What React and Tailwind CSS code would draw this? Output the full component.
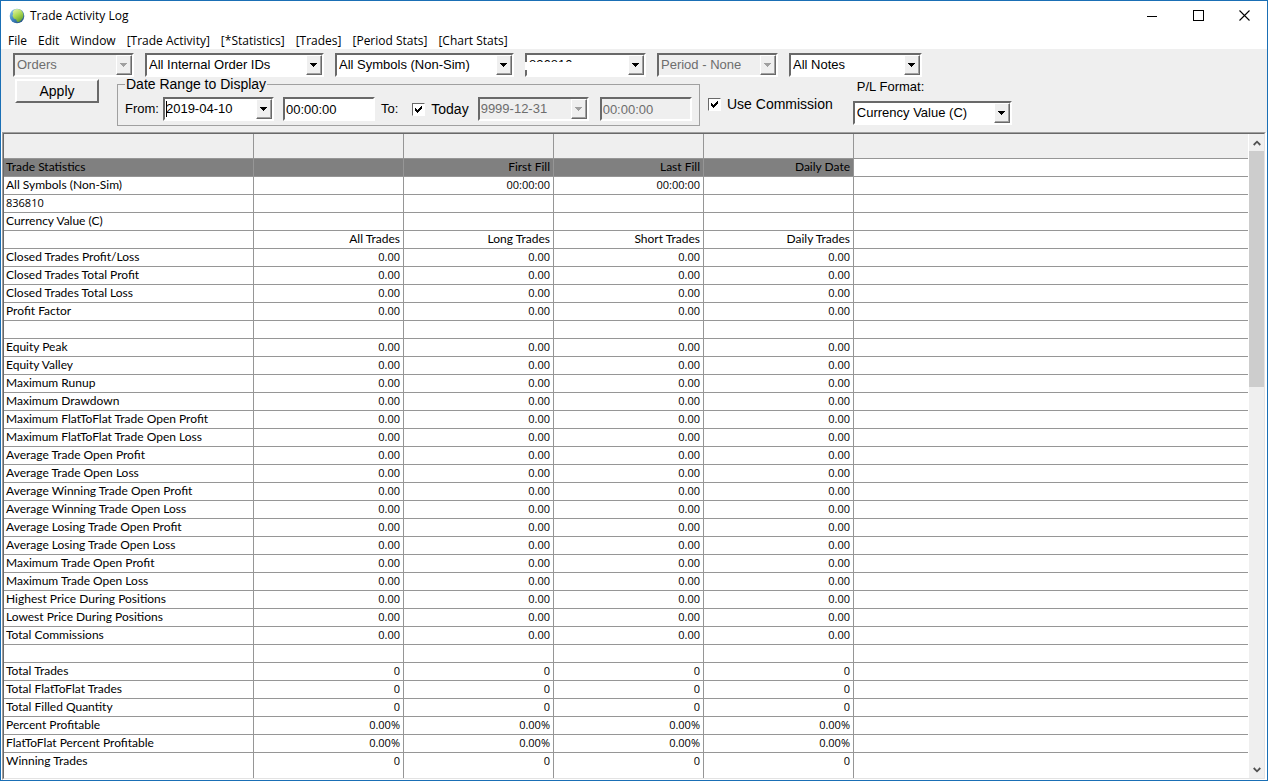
const MENUS = [
  "File",
  "Edit",
  "Window",
  "[Trade Activity]",
  "[*Statistics]",
  "[Trades]",
  "[Period Stats]",
  "[Chart Stats]",
];

const money = ["0.00", "0.00", "0.00", "0.00"];
const count = ["0", "0", "0", "0"];
const percent = ["0.00%", "0.00%", "0.00%", "0.00%"];
const blank = ["", "", "", ""];

const ROWS = [
  ["All Symbols (Non-Sim)", ["", "00:00:00", "00:00:00", ""]],
  ["836810", blank],
  ["Currency Value (C)", blank],
  ["", ["All Trades", "Long Trades", "Short Trades", "Daily Trades"]],
  ["Closed Trades Profit/Loss", money],
  ["Closed Trades Total Profit", money],
  ["Closed Trades Total Loss", money],
  ["Profit Factor", money],
  ["", blank],
  ["Equity Peak", money],
  ["Equity Valley", money],
  ["Maximum Runup", money],
  ["Maximum Drawdown", money],
  ["Maximum FlatToFlat Trade Open Profit", money],
  ["Maximum FlatToFlat Trade Open Loss", money],
  ["Average Trade Open Profit", money],
  ["Average Trade Open Loss", money],
  ["Average Winning Trade Open Profit", money],
  ["Average Winning Trade Open Loss", money],
  ["Average Losing Trade Open Profit", money],
  ["Average Losing Trade Open Loss", money],
  ["Maximum Trade Open Profit", money],
  ["Maximum Trade Open Loss", money],
  ["Highest Price During Positions", money],
  ["Lowest Price During Positions", money],
  ["Total Commissions", money],
  ["", blank],
  ["Total Trades", count],
  ["Total FlatToFlat Trades", count],
  ["Total Filled Quantity", count],
  ["Percent Profitable", percent],
  ["FlatToFlat Percent Profitable", percent],
  ["Winning Trades", count],
];

const SUNKEN = "border-2 border-t-[#696969] border-l-[#696969] border-r-white border-b-white";
const RAISED = "border border-t-white border-l-white border-r-[#696969] border-b-[#696969]";

function ArrowFace({ disabled }) {
  return (
    <span
      className={`flex h-full w-full items-center justify-center border-r border-b border-[#a0a0a0] bg-[#efefef] ${
        disabled ? "text-[#a0a0a0]" : "text-black"
      }`}
    >
      <svg width="7" height="4" viewBox="0 0 7 4" fill="currentColor" shapeRendering="crispEdges" aria-hidden="true">
        <path d="M0 0h7v1H6v1H5v1H4v1H3V3H2V2H1V1H0z" />
      </svg>
    </span>
  );
}

function Combo({ label, value, width, disabled = false, children }) {
  return (
    <div className={`relative h-6 shrink-0 ${width} ${SUNKEN} ${disabled ? "bg-[#efefef]" : "bg-white"}`}>
      <select
        aria-label={label}
        disabled={disabled}
        className="h-full w-full appearance-none bg-transparent pl-0.5 text-[13px] text-black outline-none disabled:text-[#6d6d6d] disabled:opacity-100"
      >
        <option>{value}</option>
      </select>
      <span className={`pointer-events-none absolute inset-y-0 right-0 w-4 ${RAISED}`}>
        <ArrowFace disabled={disabled} />
      </span>
      {children}
    </div>
  );
}

function DateBox({ label, value, disabled = false, caret = false }) {
  return (
    <div className={`relative flex h-6 w-[111px] ${SUNKEN} ${disabled ? "bg-[#efefef]" : "bg-white"}`}>
      <input
        aria-label={label}
        defaultValue={value}
        disabled={disabled}
        className="min-w-0 flex-1 bg-transparent pl-px text-[13px] text-black outline-none disabled:text-[#6d6d6d]"
      />
      {caret && <span className="absolute top-0.5 left-px h-4 w-px bg-black" />}
      <button type="button" aria-label={`Open ${label} calendar`} disabled={disabled} className={`w-4 ${RAISED}`}>
        <ArrowFace disabled={disabled} />
      </button>
    </div>
  );
}

function TimeBox({ label, value, disabled = false }) {
  return (
    <input
      aria-label={label}
      defaultValue={value}
      disabled={disabled}
      className={`h-6 w-[92px] bg-white pl-px text-[13px] text-black outline-none disabled:bg-[#efefef] disabled:text-[#6d6d6d] ${SUNKEN}`}
    />
  );
}

function Check({ children }) {
  return (
    <label className="flex items-center gap-1.5">
      <span className="relative h-[13px] w-[13px] border border-t-[#696969] border-r-white border-b-white border-l-[#696969] bg-white">
        <input type="checkbox" defaultChecked className="peer absolute inset-0 h-full w-full appearance-none" />
        <svg
          className="pointer-events-none absolute top-0.5 left-0.5 hidden peer-checked:block"
          width="7"
          height="7"
          viewBox="0 0 7 7"
          shapeRendering="crispEdges"
          aria-hidden="true"
        >
          <path d="M0 2h1v1h1v1h1V3h1V2h1V1h1V0h1v3H6v1H5v1H4v1H3v1H2V6H1V5H0z" />
        </svg>
      </span>
      {children}
    </label>
  );
}

function AppLogo() {
  return (
    <svg width="16" height="16" viewBox="0 0 16 16" aria-hidden="true">
      <defs>
        <linearGradient id="globe" x1="0" y1="0.1" x2="0.8" y2="1">
          <stop offset="0" stopColor="#8fc9ee" />
          <stop offset="0.5" stopColor="#3f86c4" />
          <stop offset="1" stopColor="#234f7d" />
        </linearGradient>
        <linearGradient id="land" x1="0.2" y1="0" x2="0.7" y2="1">
          <stop offset="0" stopColor="#e2f3a4" />
          <stop offset="0.5" stopColor="#a8d650" />
          <stop offset="1" stopColor="#5f9e2e" />
        </linearGradient>
      </defs>
      <circle cx="8" cy="8" r="7.3" fill="url(#globe)" />
      <path
        d="M5.4 1.6C8 .4 11.4 1 13.2 3.4c1.8 2.4 1.6 5.6-.2 7.8l-1.4 1.6-1.8 1.2-1.8-.2-.8-2.2-2.4-1.2-1.4-2.6.8-2.2L3.6 4z"
        fill="url(#land)"
      />
    </svg>
  );
}

function TitleBar() {
  return (
    <header className="flex h-[29px] items-center pl-2">
      <AppLogo />
      <h1 className="ml-[5px] flex-1 text-[12px]">Trade Activity Log</h1>
      <button type="button" aria-label="Minimize" className="flex h-full w-[46px] items-center justify-center">
        <svg width="10" height="10" viewBox="0 0 10 10" shapeRendering="crispEdges">
          <path d="M0 5h10v1H0z" />
        </svg>
      </button>
      <button type="button" aria-label="Maximize" className="flex h-full w-[46px] items-center justify-center">
        <svg width="11" height="11" viewBox="0 0 11 11" shapeRendering="crispEdges">
          <path d="M.5.5h10v10H.5z" fill="none" stroke="#000" />
        </svg>
      </button>
      <button type="button" aria-label="Close" className="flex h-full w-[46px] items-center justify-center">
        <svg width="11" height="11" viewBox="0 0 11 11">
          <path d="M.5.5l10 10M10.5.5l-10 10" stroke="#000" strokeWidth="1.1" />
        </svg>
      </button>
    </header>
  );
}

function Toolbar() {
  return (
    <section className="bg-[#efefef] pt-1 pb-1.5 font-['Liberation_Sans',Arial,sans-serif] text-[14px] leading-4 text-black">
      <div className="flex gap-[11px] pl-3">
        <Combo label="Record type" value="Orders" width="w-[121px]" disabled />
        <Combo label="Order IDs" value="All Internal Order IDs" width="w-[179px]" />
        <Combo label="Symbols" value="All Symbols (Non-Sim)" width="w-[179px]" />
        <Combo label="Account" value="836810" width="w-[121px]">
          <span className="absolute top-[7px] -left-0.5 h-2 w-24 bg-white" />
        </Combo>
        <Combo label="Period" value="Period - None" width="w-[121px]" disabled />
        <Combo label="Notes" value="All Notes" width="w-[133px]" />
      </div>

      <div className="flex items-start pl-3.5">
        <button
          type="button"
          className="mt-0.5 mr-[18px] h-6 w-[84px] border-2 border-t-white border-r-[#696969] border-b-[#696969] border-l-white"
        >
          Apply
        </button>

        <fieldset className="h-[49px] w-[583px] border border-[#a0a0a0] pl-[7px]">
          <legend className="h-3.5 px-px leading-3.5">Date Range to Display</legend>
          <div className="flex items-center pt-1.5 text-[13px]">
            <span className="mr-1">From:</span>
            <DateBox label="From date" value="2019-04-10" caret />
            <span className="mr-1.5 ml-[9px]">
              <TimeBox label="From time" value="00:00:00" />
            </span>
            <span className="mr-3.5">To:</span>
            <span className="mr-[9px] text-[14px]">
              <Check>Today</Check>
            </span>
            <DateBox label="To date" value="9999-12-31" disabled />
            <span className="ml-[11px]">
              <TimeBox label="To time" value="00:00:00" disabled />
            </span>
          </div>
        </fieldset>

        <div className="mt-[19px] ml-2">
          <Check>Use Commission</Check>
        </div>

        <div className="mt-0.5 ml-5">
          <p className="mb-1.5 pl-1 text-[13px]">P/L Format:</p>
          <Combo label="P/L Format" value="Currency Value (C)" width="w-[159px]" />
        </div>
      </div>
    </section>
  );
}

// Figures are set in a narrower face than the labels.
function CellText({ text }) {
  return /^\d/.test(text) ? (
    <span className="block font-['Open_Sans','Noto_Sans',sans-serif] text-[11px] leading-4">{text}</span>
  ) : (
    <span className="block leading-4">{text}</span>
  );
}

function StatsTable() {
  const cell = "border-r border-b border-[#969696] p-0";
  return (
    <table className="w-full table-fixed border-separate border-spacing-0 font-['Lato','Open_Sans',sans-serif] text-[12px]">
      <colgroup>
        <col className="w-[250px]" />
        <col className="w-[150px]" />
        <col className="w-[150px]" />
        <col className="w-[150px]" />
        <col className="w-[150px]" />
        <col />
      </colgroup>
      <thead>
        <tr className="h-[25px] bg-[#efefef]">
          {[0, 1, 2, 3, 4].map((i) => (
            <td key={i} className={cell} />
          ))}
          <td className="border-b border-[#969696]" />
        </tr>
        <tr className="h-[18px] text-right align-top">
          <th className={`${cell} bg-[#808080] pl-0.5 text-left font-normal`}>
            <CellText text="Trade Statistics" />
          </th>
          <th className={`${cell} bg-[#808080]`} />
          {["First Fill", "Last Fill", "Daily Date"].map((name) => (
            <th key={name} className={`${cell} bg-[#808080] pr-[3px] text-right font-normal`}>
              <CellText text={name} />
            </th>
          ))}
          <td className="border-b border-[#969696] p-0" />
        </tr>
      </thead>
      <tbody>
        {ROWS.map(([label, values], i) => (
          <tr key={i} className="h-[18px] text-right align-top last:h-8">
            <th className={`${cell} pl-0.5 text-left font-normal`}>
              <CellText text={label} />
            </th>
            {values.map((value, j) => (
              <td key={j} className={`${cell} pr-[3px]`}>
                <CellText text={value} />
              </td>
            ))}
            <td className="border-b border-[#969696] p-0" />
          </tr>
        ))}
      </tbody>
    </table>
  );
}

function ScrollBar() {
  return (
    <div className="flex w-[15px] shrink-0 flex-col bg-[#efefef]">
      <button type="button" aria-label="Scroll up" className="flex h-[17px] items-center justify-center">
        <svg width="8" height="6" viewBox="0 0 8 6">
          <path d="M.7 5L4 1.7 7.3 5" fill="none" stroke="#505050" strokeWidth="1.8" />
        </svg>
      </button>
      <div className="h-[236px] bg-[#cdcdcd]" />
      <div className="flex-1" />
      <button type="button" aria-label="Scroll down" className="flex h-[17px] items-center justify-center">
        <svg width="8" height="6" viewBox="0 0 8 6">
          <path d="M.7 1L4 4.3 7.3 1" fill="none" stroke="#505050" strokeWidth="1.8" />
        </svg>
      </button>
    </div>
  );
}

export default function App() {
  return (
    <div className="flex h-screen flex-col border border-[#1a6fb5] bg-white font-['Open_Sans','Noto_Sans',sans-serif] text-black">
      <TitleBar />
      <nav className="flex h-[19px] items-center gap-[11px] pt-0.5 pl-[7px] text-[12px]">
        {MENUS.map((menu) => (
          <button key={menu} type="button">
            {menu}
          </button>
        ))}
      </nav>
      <Toolbar />
      <div className="mx-px flex min-h-0 flex-1 border border-t-[#a0a0a0] border-r-white border-b-white border-l-[#a0a0a0]">
        <main className="flex min-w-0 flex-1 border border-t-[#696969] border-r-[#e3e3e3] border-b-[#e3e3e3] border-l-[#696969]">
          <div className="flex min-w-0 flex-1 items-start overflow-hidden pr-px">
            <StatsTable />
          </div>
          <ScrollBar />
        </main>
      </div>
    </div>
  );
}
